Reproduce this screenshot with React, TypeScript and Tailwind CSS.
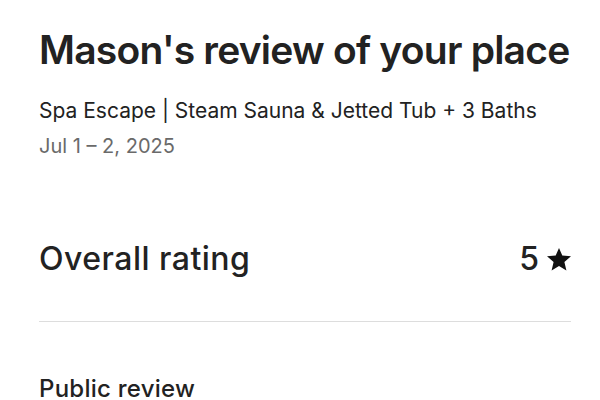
export default function App() {
  return (
    <div
      className="w-[600px] h-[400px] overflow-hidden bg-white text-[#222222] pl-[39px] pr-[29px]"
      style={{ fontFamily: "Inter, 'Noto Sans', sans-serif" }}
    >
      <h1 className="pt-[26px] text-[39px] leading-[48px] font-semibold tracking-[-0.02em] whitespace-nowrap">
        Mason's review of your place
      </h1>
      <p className="mt-[23px] text-[21px] leading-[28px] whitespace-nowrap">
        Spa Escape | Steam Sauna &amp; Jetted Tub + 3 Baths
      </p>
      <p className="mt-[7px] text-[20px] leading-[28px] text-[#6a6a6a]">Jul 1 – 2, 2025</p>
      <div className="mt-[79px] flex items-center justify-between h-[40px]">
        <span className="text-[32px] leading-[40px] font-medium tracking-[0.015em]">Overall rating</span>
        <span className="flex items-center gap-[8px] text-[32px] leading-[40px] font-medium">
          5
          <svg width="24" height="23" viewBox="0 0 24 23" className="mt-[1px]">
            <path
              d="M12 0l3.3 7.6 8.7.7-6.6 5.7 2 8.6L12 18l-7.4 4.6 2-8.6L0 8.3l8.7-.7z"
              fill="#111111"
            />
          </svg>
        </span>
      </div>
      <div className="mt-[42px] h-px bg-[#dddddd]" />
      <h2 className="mt-[53px] text-[24px] leading-[28px] font-medium tracking-[0.01em]">Public review</h2>
    </div>
  );
}
